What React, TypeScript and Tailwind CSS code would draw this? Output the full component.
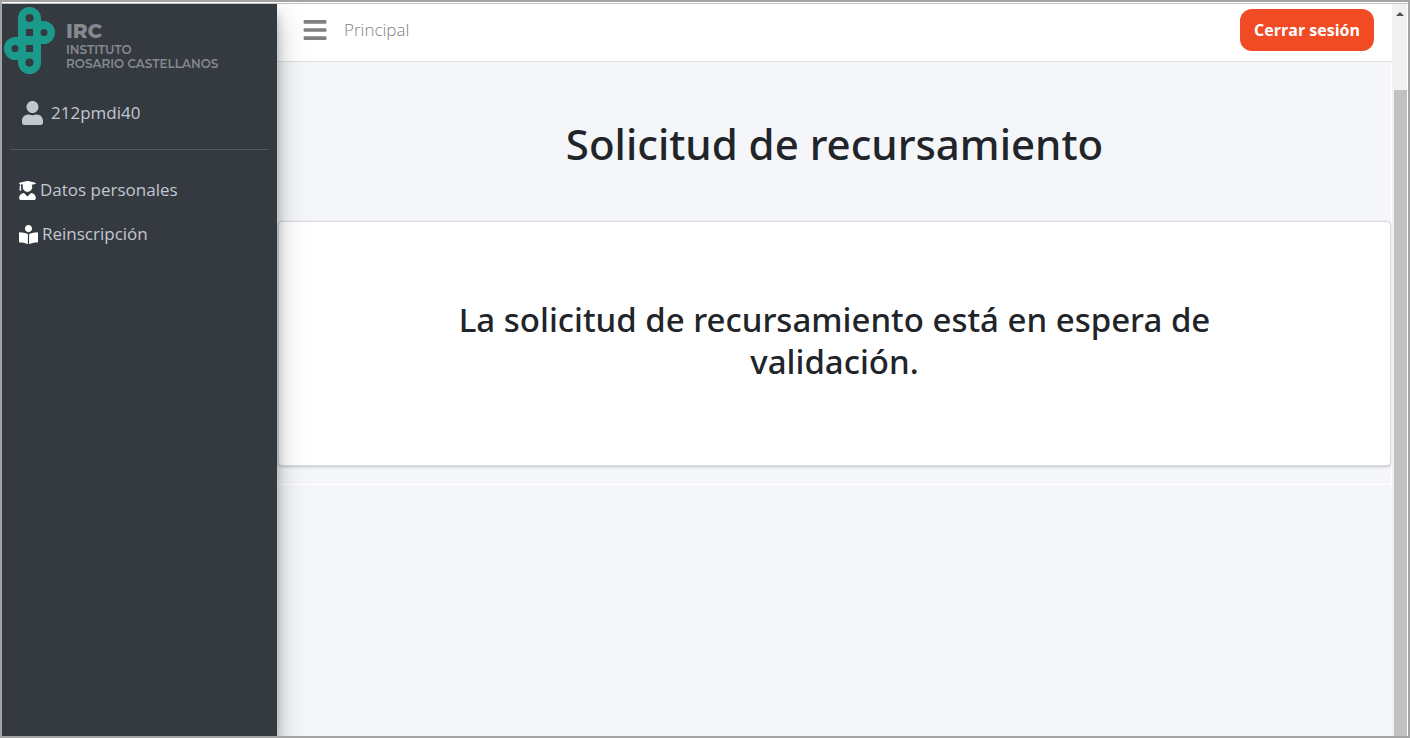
import { FaBars, FaBookReader, FaUser, FaUserGraduate } from "react-icons/fa";

const menuItems = [
  { name: "Datos personales", href: "#datos", icon: FaUserGraduate, iconClass: "h-[19px] w-[17px]" },
  { name: "Reinscripción", href: "#reinscripcion", icon: FaBookReader, iconClass: "h-[19px] w-[19px]" },
];

function Logo() {
  return (
    <a href="#inicio" className="flex h-[72px] items-start pl-0.5 pt-[3px] text-[#85898e]">
      <svg viewBox="0 0 52 68" className="h-[68px] w-[52px] shrink-0" aria-hidden="true">
        <g fill="#1b998b">
          <rect x="14" y="0" width="23" height="67" rx="11.5" />
          <rect x="14" y="14" width="37" height="23" rx="11.5" />
          <rect x="0" y="30" width="37" height="23" rx="11.5" />
        </g>
        <g fill="#343a40">
          <rect x="22" y="22" width="7" height="7" />
          <rect x="22" y="38" width="7" height="7" />
          <circle cx="25.5" cy="11" r="4" />
          <circle cx="40" cy="25.5" r="3.5" />
          <circle cx="11" cy="41.5" r="3.5" />
          <circle cx="25.5" cy="55.5" r="4" />
        </g>
      </svg>
      <span className="flex flex-col pl-[10px] pt-3 font-['Montserrat','Lato','Liberation_Sans',sans-serif]">
        <span className="text-[20px] font-extrabold leading-6">IRC</span>
        <span className="text-[12px] font-semibold leading-[14px]">INSTITUTO</span>
        <span className="text-[12px] font-semibold leading-[14px]">ROSARIO CASTELLANOS</span>
      </span>
    </a>
  );
}

function Sidebar() {
  return (
    <aside className="z-10 flex w-[275px] shrink-0 flex-col bg-[#343a40] text-[#c2c7d0] shadow-[0_14px_28px_rgba(0,0,0,0.25),0_10px_10px_rgba(0,0,0,0.22)]">
      <Logo />
      <div className="mx-2 flex h-[74px] items-center gap-2 border-b border-[#4f5962] pl-3">
        <FaUser className="h-6 w-[21px]" aria-hidden="true" />
        <a href="#perfil" className="text-[17px]">212pmdi40</a>
      </div>
      <nav className="flex flex-col pt-[18px]">
        {menuItems.map(({ name, href, icon: Icon, iconClass }) => (
          <a key={name} href={href} className="flex h-11 items-center gap-1 pl-[17px] text-[17px]">
            <Icon className={`${iconClass} text-white`} aria-hidden="true" />
            {name}
          </a>
        ))}
      </nav>
    </aside>
  );
}

function Navbar() {
  return (
    <header className="flex h-[58px] items-center border-b border-[#dee2e6] bg-white pb-1.5 pl-[26px] pr-[18px]">
      <button type="button" aria-label="Menú" className="text-[#808080]">
        <FaBars className="h-[26px] w-6" />
      </button>
      <a href="#principal" className="pl-[17px] text-[17px] font-light text-[#808080]">
        Principal
      </a>
      <button
        type="button"
        className="ml-auto h-[42px] rounded-xl bg-[#f04b25] px-3.5 text-base font-bold text-white"
      >
        Cerrar sesión
      </button>
    </header>
  );
}

function ScrollTrack() {
  return (
    <div className="flex w-[15px] shrink-0 flex-col bg-[#f1f1f1]" aria-hidden="true">
      <div className="flex h-[86px] justify-center pt-2">
        <svg viewBox="0 0 8 4" className="h-1 w-2">
          <path d="M0 4 4 0l4 4z" fill="#505050" />
        </svg>
      </div>
      <div className="ml-0.5 flex-1 bg-[#c1c1c1]" />
    </div>
  );
}

export default function App() {
  return (
    <div className="flex h-screen flex-col border-2 border-[#a3a3a3] bg-white font-['Segoe_UI','Open_Sans','Noto_Sans',sans-serif]">
      <div className="mt-px h-px shrink-0 bg-[#c4c4c4]" />
      <div className="flex min-h-0 flex-1 overflow-hidden pr-px">
        <Sidebar />
        <div className="flex min-w-0 flex-1 flex-col bg-[#f4f6f9] text-[#212529]">
          <Navbar />
          <main className="border-b border-r border-white pb-[18px] pl-px font-['Segoe_UI','Noto_Sans','Open_Sans',sans-serif]">
            <h1 className="pb-[53px] pt-[58px] text-center text-[42px] font-medium leading-[48px]">
              Solicitud de recursamiento
            </h1>
            <section className="rounded border border-[#d5d9dd] bg-white px-32 pb-[82px] pt-[77px] text-center shadow-[0_1px_3px_rgba(0,0,0,0.2)]">
              <h2 className="mx-auto max-w-[800px] text-[33px] font-medium leading-[42px]">
                La solicitud de recursamiento está en espera de validación.
              </h2>
            </section>
          </main>
        </div>
        <ScrollTrack />
      </div>
    </div>
  );
}
